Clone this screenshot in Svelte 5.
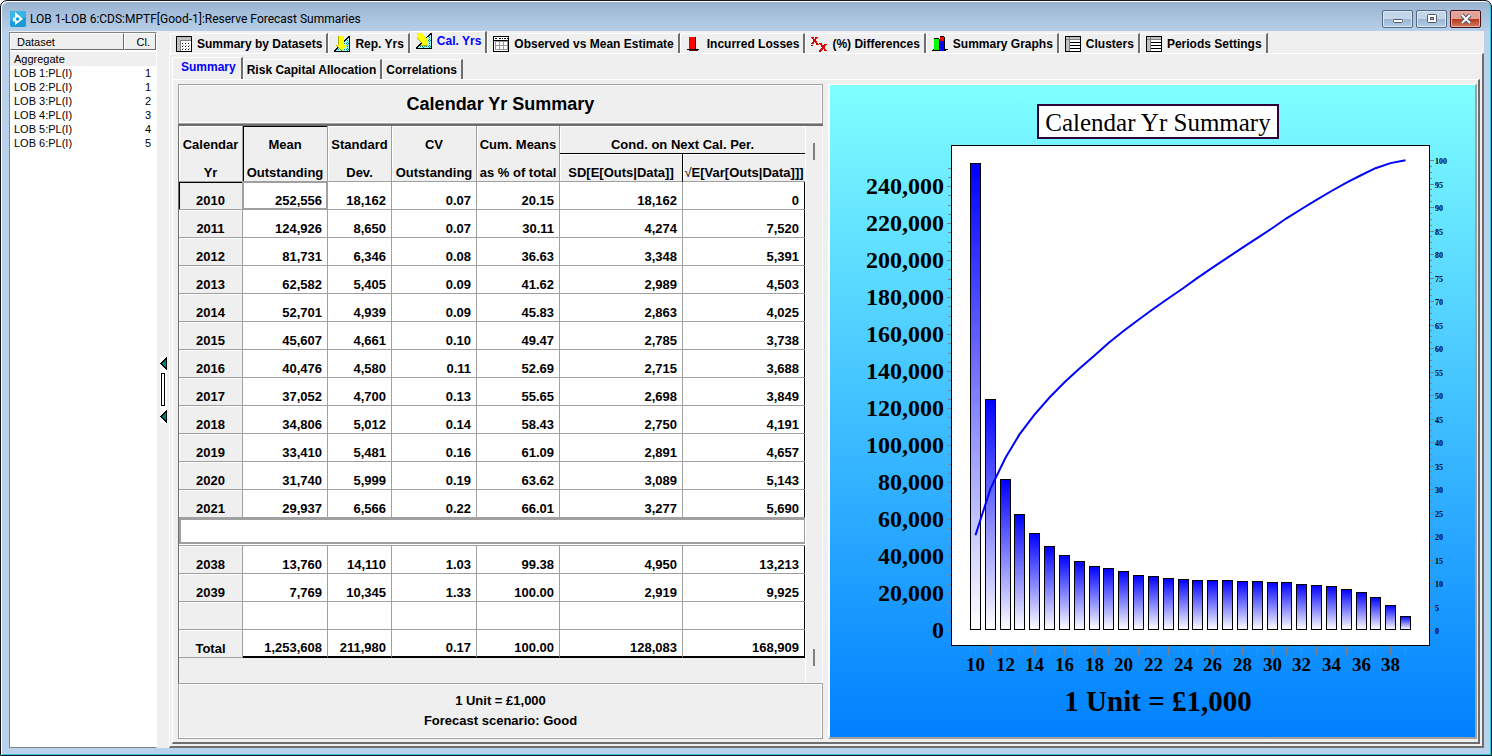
<script lang="ts">
	type Row = { year: string; cells: string[] };

	const datasets = [
		{ name: 'Aggregate', cluster: '' },
		{ name: 'LOB 1:PL(I)', cluster: '1' },
		{ name: 'LOB 2:PL(I)', cluster: '1' },
		{ name: 'LOB 3:PL(I)', cluster: '2' },
		{ name: 'LOB 4:PL(I)', cluster: '3' },
		{ name: 'LOB 5:PL(I)', cluster: '4' },
		{ name: 'LOB 6:PL(I)', cluster: '5' }
	];

	const tabs = [
		{ icon: 'grid', label: 'Summary by Datasets' },
		{ icon: 'down', label: 'Rep. Yrs' },
		{ icon: 'diagonal', label: 'Cal. Yrs' },
		{ icon: 'table', label: 'Observed vs Mean Estimate' },
		{ icon: 'loss', label: 'Incurred Losses' },
		{ icon: 'cross', label: '(%) Differences' },
		{ icon: 'bars', label: 'Summary Graphs' },
		{ icon: 'list', label: 'Clusters' },
		{ icon: 'list', label: 'Periods Settings' }
	];
	const subTabs = ['Summary', 'Risk Capital Allocation', 'Correlations'];

	let activeTab = $state('Cal. Yrs');
	let activeSub = $state('Summary');
	let selected = $state('Aggregate');

	const upper: Row[] = [
		{ year: '2010', cells: ['252,556', '18,162', '0.07', '20.15', '18,162', '0'] },
		{ year: '2011', cells: ['124,926', '8,650', '0.07', '30.11', '4,274', '7,520'] },
		{ year: '2012', cells: ['81,731', '6,346', '0.08', '36.63', '3,348', '5,391'] },
		{ year: '2013', cells: ['62,582', '5,405', '0.09', '41.62', '2,989', '4,503'] },
		{ year: '2014', cells: ['52,701', '4,939', '0.09', '45.83', '2,863', '4,025'] },
		{ year: '2015', cells: ['45,607', '4,661', '0.10', '49.47', '2,785', '3,738'] },
		{ year: '2016', cells: ['40,476', '4,580', '0.11', '52.69', '2,715', '3,688'] },
		{ year: '2017', cells: ['37,052', '4,700', '0.13', '55.65', '2,698', '3,849'] },
		{ year: '2018', cells: ['34,806', '5,012', '0.14', '58.43', '2,750', '4,191'] },
		{ year: '2019', cells: ['33,410', '5,481', '0.16', '61.09', '2,891', '4,657'] },
		{ year: '2020', cells: ['31,740', '5,999', '0.19', '63.62', '3,089', '5,143'] },
		{ year: '2021', cells: ['29,937', '6,566', '0.22', '66.01', '3,277', '5,690'] }
	];
	const lower: Row[] = [
		{ year: '2038', cells: ['13,760', '14,110', '1.03', '99.38', '4,950', '13,213'] },
		{ year: '2039', cells: ['7,769', '10,345', '1.33', '100.00', '2,919', '9,925'] },
		{ year: '', cells: ['', '', '', '', '', ''] },
		{ year: 'Total', cells: ['1,253,608', '211,980', '0.17', '100.00', '128,083', '168,909'] }
	];

	// chart geometry, in viewBox units
	const total = 1253608;
	const means = [
		252556, 124926, 81731, 62582, 52701, 45607, 40476, 37052, 34806, 33410, 31740, 29937, 29200,
		28000, 27500, 27000, 27000, 27000, 26500, 26500, 26000, 25800, 24900, 24300, 23700, 22200,
		20600, 17900, 13760, 7769
	];
	const zeroY = 545;
	const x = (i: number) => Math.round(145 + (i * 430) / 29);
	const y = (v: number) => Math.round(zeroY - (v / 20000) * 37);
	const yPct = (p: number) => zeroY - p * 4.7;

	const bars = means.map((v, i) => ({ x: x(i), top: y(v), label: 10 + i }));
	const leftTicks = Array.from({ length: 51 }, (_, i) => i * 5000);
	const rightTicks = Array.from({ length: 81 }, (_, i) => i * 1.25);

	let running = 0;
	const line = means
		.map((v, i) => {
			running += v;
			return `${x(i) + 0.5},${yPct((running / total) * 100).toFixed(1)}`;
		})
		.join(' ');
</script>

{#snippet icon(name: string)}
	<svg class="icon" viewBox="0 0 16 16" shape-rendering="crispEdges" aria-hidden="true">
		{#if name === 'grid'}
			<rect x=".5" y=".5" width="15" height="15" fill="#fff" stroke="#000" />
			<path d="M1 1h14v3H4v11H1z" fill="#c0c0c0" />
			<path d="M4.500 15V4.500H15" fill="none" stroke="#808080" />
			<path d="M6 7.500h9M6 10.500h9M6 13.500h9" stroke="#000" stroke-dasharray="1 2" />
			<path d="M7 9h8M7 12h8" stroke="#a0a0a0" stroke-dasharray="1 2" />
		{:else if name === 'down' || name === 'diagonal'}
			<path d="M15.500 0v15.500H0z" fill="#9ff" />
			<path d="M13 4v11M10 7v8M7 10v5M4 13v2M13 4h2M10 7h5M7 10h8M4 13h11" stroke="#088" stroke-dasharray="1 1" />
			<path d="M15.500 0v15.500H0L15.500 0" fill="none" stroke="#000" />
			{#if name === 'down'}
				<path d="M5 0h5v9h3l-5 6-6-6h3z" fill="#ff0" />
				<path d="M4.500 0v9M2 9l5 5" stroke="#aa0" />
			{:else}
				<path d="M1 0h4l5 5 2-2v9H4l2-2-5-5z" fill="#ff0" />
				<path d="M1 5l5 5M4 12.500h8" stroke="#aa0" />
			{/if}
		{:else if name === 'table'}
			<rect x=".5" y=".5" width="15" height="15" fill="#fff" stroke="#000" />
			<path d="M2 2.500h3M6 2.500h4M11 2.500h4" stroke="#000" stroke-dasharray="2 1" />
			<path d="M2 5.500h12v8H2zM6.500 5v9M10.500 5v9M2 9.500h12" fill="none" stroke="#999" />
			<path d="M1 4.500h14" stroke="#000" />
		{:else if name === 'loss'}
			<path d="M3 1h7v13H3z" fill="#000" />
			<path d="M3 1h6v12H3z" fill="#f00" />
			<path d="M1 13.500h12" stroke="#000" />
			<path d="M3 14.500h9" stroke="#600" />
		{:else if name === 'cross'}
			<path d="M1 1l6 8M6 1L1 8M9 7l6 8M15 8l-6 7" stroke="#d00" stroke-width="2" fill="none" />
			<path d="M0 9.500h2M8 15.500h2" stroke="#800" />
		{:else if name === 'bars'}
			<path d="M1 13.500h15M0 14.500h14" stroke="#000" />
			<path d="M2 3h5v11H2z" fill="#0f0" />
			<path d="M8 1h4v4H8z" fill="#f00" />
			<path d="M8 5h4v10H8z" fill="#00f" />
			<path d="M2 2.500h5M7.500 3v11M8 .5h4M12.500 1v13" stroke="#000" />
		{:else}
			<rect x=".5" y=".5" width="15" height="15" fill="#fff" stroke="#000" />
			<path d="M1 1h14v3H4v11H1z" fill="#c0c0c0" />
			<path d="M4.500 1v14M1 3.500h14" stroke="#808080" />
			<path d="M5 6.500h10M5 9.500h10M5 12.500h10" stroke="#000" />
		{/if}
	</svg>
{/snippet}

{#snippet tableRow(row: Row)}
	<tr class:first={row.year === '2010'} class:total={row.year === 'Total'}>
		<th scope="row">{row.year}</th>
		{#each row.cells as cell}
			<td>{cell}</td>
		{/each}
	</tr>
{/snippet}

<div class="window">
	<header class="titlebar">
		<svg class="app-icon" viewBox="0 0 16 16" aria-hidden="true">
			<rect width="16" height="16" rx="2" fill="#1a9bd7" />
			<path d="M0 2q0-2 2-2h12q2 0 2 2v4L0 10z" fill="#38b4e6" />
			<path d="M5 1l8 7-8 6V10L3 11V6l2 1z" fill="#fff" />
			<circle cx="7.500" cy="8" r="1.800" fill="#1a9bd7" />
		</svg>
		<h1>LOB 1-LOB 6:CDS:MPTF[Good-1]:Reserve Forecast Summaries</h1>
		<div class="controls">
			<button type="button" aria-label="Minimize">
				<svg viewBox="0 0 12 12"><rect x="1.500" y="6.500" width="9" height="3" rx="1" fill="#fff" stroke="#535666" /></svg>
			</button>
			<button type="button" aria-label="Maximize">
				<svg viewBox="0 0 12 12">
					<rect x="1.500" y="1.500" width="9" height="8" rx="1" fill="#fff" stroke="#535666" />
					<rect x="4.500" y="4.500" width="3" height="2" fill="#8fb0d4" stroke="#535666" />
				</svg>
			</button>
			<button type="button" class="close" aria-label="Close">
				<svg viewBox="0 0 12 12">
					<path d="M2 2l8 8M10 2l-8 8" stroke="#535666" stroke-width="4" />
					<path d="M2 2l8 8M10 2l-8 8" stroke="#fff" stroke-width="2" />
				</svg>
			</button>
		</div>
	</header>

	<div class="body">
		<aside class="datasets">
			<table>
				<thead>
					<tr><th>Dataset</th><th class="cluster">Cl.</th></tr>
				</thead>
				<tbody>
					{#each datasets as d}
						<tr class:selected={selected === d.name} onclick={() => (selected = d.name)}>
							<td>{d.name}</td>
							<td class="cluster">{d.cluster}</td>
						</tr>
					{/each}
				</tbody>
			</table>
		</aside>

		<div class="splitter">
			<svg viewBox="0 0 7 66" shape-rendering="crispEdges" aria-hidden="true">
				<rect width="7" height="66" fill="#fff" />
				<path d="M6.500 1v11L1 6.500zM6.500 54v11L1 59.500z" fill="#008080" stroke="#000" />
				<rect x="1.500" y="16.500" width="3" height="32" fill="#fff" stroke="#000" />
			</svg>
		</div>

		<main>
			<div class="tabs" role="tablist">
				{#each tabs as tab}
					<button
						type="button"
						role="tab"
						class="tab"
						class:active={activeTab === tab.label}
						aria-selected={activeTab === tab.label}
						onclick={() => (activeTab = tab.label)}
					>
						{@render icon(tab.icon)}{tab.label}
					</button>
				{/each}
			</div>

			<div class="page outer">
				<div class="tabs sub" role="tablist">
					{#each subTabs as label}
						<button
							type="button"
							role="tab"
							class="tab"
							class:active={activeSub === label}
							aria-selected={activeSub === label}
							onclick={() => (activeSub = label)}>{label}</button
						>
					{/each}
				</div>

				<div class="page inner">
					<section class="summary">
						<h2>Calendar Yr Summary</h2>
						<div class="grid-area">
							<table class="grid">
								<colgroup>
									<col class="c-year" />
									<col class="c-wide" />
									<col class="c-year" />
									<col class="c-wide" />
									<col class="c-cum" />
									<col class="c-cond" />
									<col class="c-cond" />
								</colgroup>
								<thead>
									<tr>
										<th rowspan="2"><span>Calendar</span><span>Yr</span></th>
										<th rowspan="2" class="current"><span>Mean</span><span>Outstanding</span></th>
										<th rowspan="2"><span>Standard</span><span>Dev.</span></th>
										<th rowspan="2"><span>CV</span><span>Outstanding</span></th>
										<th rowspan="2"><span>Cum. Means</span><span>as % of total</span></th>
										<th colspan="2" class="group">Cond. on Next Cal. Per.</th>
									</tr>
									<tr>
										<th class="sd">SD[E[Outs|Data]]</th>
										<th><i>√</i>E[Var[Outs|Data]]]</th>
									</tr>
								</thead>
								<tbody>
									{#each upper as row}
										{@render tableRow(row)}
									{/each}
									<tr class="band"><td colspan="7"><div></div></td></tr>
									{#each lower as row}
										{@render tableRow(row)}
									{/each}
								</tbody>
							</table>
							<div class="rail"><span></span><span></span></div>
						</div>
						<footer>
							<p>1 Unit = £1,000</p>
							<p>Forecast scenario: Good</p>
						</footer>
					</section>

					<section class="chart">
						<svg
							viewBox="0 0 643 652"
							preserveAspectRatio="xMinYMin meet"
							role="img"
							aria-label="Calendar Yr Summary"
						>
							<defs>
								<linearGradient id="bar" x1="0" y1="0" x2="0" y2="1">
									<stop offset="0" stop-color="#00f" />
									<stop offset="1" stop-color="#fff" />
								</linearGradient>
							</defs>

							<rect x="208" y="20" width="240" height="33" fill="#fff" stroke="#300038" stroke-width="2" />
							<text class="title" x="328" y="46">Calendar Yr Summary</text>

							<rect x="121.500" y="60.500" width="478" height="500" fill="#fff" stroke="#000" />

							{#each leftTicks as v}
								{@const major = v % 20000 === 0}
								<line class="tick" x1={major ? 117 : 118} x2="121" y1={y(v) + 0.5} y2={y(v) + 0.5} />
								{#if major}
									<text class="left" x="114" y={y(v) + 8}>{v.toLocaleString('en-US')}</text>
								{/if}
							{/each}

							{#each rightTicks as p}
								{@const major = p % 5 === 0}
								{@const ty = Math.round(yPct(p)) + 0.5}
								<line class="tick" x1="600" x2={major ? 604 : 602} y1={ty} y2={ty} />
								{#if major}
									<text class="right" x="605" y={ty + 3}>{p}</text>
								{/if}
							{/each}

							{#each bars as bar}
								<rect
									x={bar.x - 4.5}
									y={bar.top + 0.5}
									width="10"
									height={zeroY - bar.top - 1}
									fill="url(#bar)"
									stroke="#000"
								/>
								<line class="tick" x1={bar.x + 0.5} x2={bar.x + 0.5} y1="561" y2="570" />
								{#if bar.label % 2 === 0}
									<text class="bottom" x={bar.x + 0.5} y="586">{bar.label}</text>
								{/if}
							{/each}

							<polyline points={line} fill="none" stroke="#00f" stroke-width="2" />
							<text class="caption" x="328" y="626">1 Unit = £1,000</text>
						</svg>
					</section>
				</div>
			</div>
		</main>
	</div>
</div>

<style>
	:global(body) {
		background: #fff;
	}
	* {
		box-sizing: border-box;
	}
	button {
		font: inherit;
		color: inherit;
		cursor: pointer;
	}

	.window {
		display: flex;
		flex-direction: column;
		min-height: 100vh;
		padding: 0 7px 7px 8px;
		border: 1px solid #16161e;
		border-radius: 7px 7px 0 0;
		background: linear-gradient(#98b2d1, #b9d1ea 32px);
		box-shadow:
			inset 1px 1px #fff,
			inset -1px -1px #2cc8e0;
		font-family: 'Liberation Sans', Arial, sans-serif;
		font-size: 12px;
		color: #000;
	}

	.titlebar {
		display: flex;
		align-items: center;
		gap: 4px;
		height: 30px;
		padding: 6px 3px 0 1px;
	}
	.app-icon {
		width: 16px;
		height: 16px;
	}
	h1 {
		flex: 1;
		margin: 0;
		font: 12px/16px Roboto, 'Open Sans', sans-serif;
	}
	.controls {
		display: flex;
		gap: 3px;
	}
	.controls button {
		display: flex;
		align-items: center;
		justify-content: center;
		width: 31px;
		height: 18px;
		padding: 0;
		border: 1px solid #56687f;
		border-radius: 2px;
		background: linear-gradient(#c3d5e9 48%, #98b5d4 50%, #b5cde6);
		box-shadow: inset 0 0 0 1px #d9e6f3;
	}
	.controls svg {
		width: 12px;
		height: 12px;
	}
	.controls .close {
		border-color: #45101b;
		background: linear-gradient(#e0a197 48%, #b8351d 50%, #d37a5e);
		box-shadow: inset 0 0 0 1px #e6b5aa;
	}

	.body {
		flex: 1;
		display: flex;
		background: #efefef;
	}

	.datasets {
		flex: 0 0 148px;
		margin-top: 1px;
		border: 1px solid #828282;
		border-right-color: #fff;
		background: #fff;
		font-size: 11px;
		line-height: 14px;
	}
	.datasets table {
		width: 100%;
		border-spacing: 0;
	}
	.datasets th {
		height: 17px;
		padding: 0 6px;
		border: 1px solid #fff;
		border-right-color: #696969;
		border-bottom-color: #696969;
		background: #efefef;
		font-weight: normal;
		text-align: left;
	}
	.datasets td {
		height: 14px;
		padding: 0 4px;
	}
	.datasets tbody::before {
		content: '';
		display: block;
		height: 2px;
	}
	.datasets .cluster {
		width: 32px;
		padding: 0 5px;
		text-align: right;
	}
	.selected td {
		background: #efefef;
	}

	.splitter {
		flex: 0 0 12px;
		display: flex;
		align-items: center;
		padding-left: 3px;
	}
	.splitter svg {
		width: 7px;
		height: 66px;
	}

	main {
		flex: 1;
		min-width: 0;
		display: flex;
		flex-direction: column;
	}

	.tabs {
		display: flex;
		align-items: flex-end;
		height: 22px;
		padding-left: 1px;
		font-weight: bold;
	}
	.tab {
		display: flex;
		align-items: center;
		gap: 5px;
		height: 20px;
		padding: 0 4px 0 5px;
		border: 0;
		border-top: 1px solid #fff;
		border-left: 1px solid #fff;
		border-right: 2px solid #6e6e6e;
		border-radius: 2px 0 0 0;
		background: #efefef;
		white-space: nowrap;
	}
	.tab.active {
		height: 22px;
		padding-bottom: 3px;
		color: #00f;
	}
	.icon {
		width: 16px;
		height: 16px;
	}
	.tabs.sub {
		height: 24px;
		padding-left: 0;
	}
	.sub .tab {
		padding: 0 4px 0 3px;
	}
	.sub .tab.active {
		padding: 0 5px 3px 8px;
	}

	.page {
		flex: 1;
		display: flex;
		border: 1px solid #fff;
		border-right: 2px solid #6e6e6e;
		border-bottom: 2px solid #6e6e6e;
	}
	.outer {
		flex-direction: column;
		padding: 1px 2px 2px;
	}
	.inner {
		gap: 5px;
		padding: 4px 1px 3px 5px;
	}

	.summary,
	.chart {
		flex: 1;
		min-width: 0;
		display: flex;
		flex-direction: column;
	}

	h2,
	footer {
		margin: 0;
		border: 1px solid #a0a0a0;
		box-shadow:
			inset 1px 1px #fff,
			inset -1px -1px #fff;
		text-align: center;
	}
	h2 {
		font-size: 18px;
		line-height: 38px;
	}
	footer {
		padding: 7px 0;
		font-size: 13px;
		font-weight: bold;
		line-height: 20px;
	}
	footer p {
		margin: 0;
	}

	.grid-area {
		flex: 1;
		display: grid;
		grid-template-columns: minmax(0, 1fr) 18px;
		border-top: 2px solid #6e6e6e;
		border-left: 1px solid #6e6e6e;
	}
	.grid {
		width: 100%;
		align-self: start;
		table-layout: fixed;
		border-spacing: 0;
		font-size: 13px;
		font-weight: bold;
		line-height: 16px;
		white-space: nowrap;
	}
	.c-year {
		width: 64px;
	}
	.c-wide {
		width: 85px;
	}
	.c-cum {
		width: 83px;
	}
	.c-cond {
		width: 123px;
	}
	.grid th,
	.grid td {
		height: 28px;
		padding: 0;
		border-right: 1px solid #a0a0a0;
		border-bottom: 1px solid #a0a0a0;
		vertical-align: bottom;
	}
	.grid th {
		background: #efefef;
		box-shadow: inset 1px 1px #fff;
		text-align: center;
	}
	.grid td {
		padding-right: 5px;
		background: #fff;
		text-align: right;
	}
	.grid th span {
		display: block;
	}
	.grid th span + span {
		margin-top: 12px;
	}
	.grid th i {
		font-style: normal;
		font-weight: normal;
	}
	.grid .current {
		box-shadow: inset 1px 1px #000;
	}
	.grid .group {
		border-bottom-color: #000;
	}
	.grid .sd {
		border-right-color: #000;
	}
	.grid .first th {
		box-shadow: inset 1px 1px #000;
	}
	.grid .first td:nth-child(2) {
		box-shadow: inset 0 0 0 1px #a0a0a0;
	}
	.grid tbody td:last-child {
		border-right: 2px solid #000;
	}
	.grid .total td {
		border-bottom: 2px solid #000;
	}
	.grid tbody .band td {
		padding: 0;
		border-right: 0;
		vertical-align: top;
	}
	.band div {
		height: 26px;
		border: 2px solid #a0a0a0;
	}
	.rail {
		display: flex;
		flex-direction: column;
		align-items: center;
		justify-content: space-between;
		padding: 17px 0;
		border-right: 1px solid #fff;
		border-left: 1px solid #fff;
	}
	.rail span {
		width: 2px;
		height: 17px;
		background: #808080;
	}

	.chart {
		border: 1px solid #fff;
		border-left-width: 2px;
		border-right: 2px solid #a0a0a0;
		border-bottom: 2px solid #a0a0a0;
		background: linear-gradient(#80ffff, #0080ff);
	}
	.chart svg {
		flex: 1 0 0;
		width: 100%;
		height: 0;
		min-height: 0;
		font-family: 'Liberation Serif', 'Times New Roman', serif;
		font-weight: bold;
	}
	.tick {
		stroke: #808080;
	}
	.title {
		font-size: 25px;
		font-weight: normal;
		text-anchor: middle;
	}
	.left {
		font-size: 24px;
		text-anchor: end;
	}
	.right {
		font-size: 8px;
	}
	.bottom {
		font-size: 19px;
		text-anchor: middle;
	}
	.caption {
		font-size: 29px;
		text-anchor: middle;
	}
</style>
